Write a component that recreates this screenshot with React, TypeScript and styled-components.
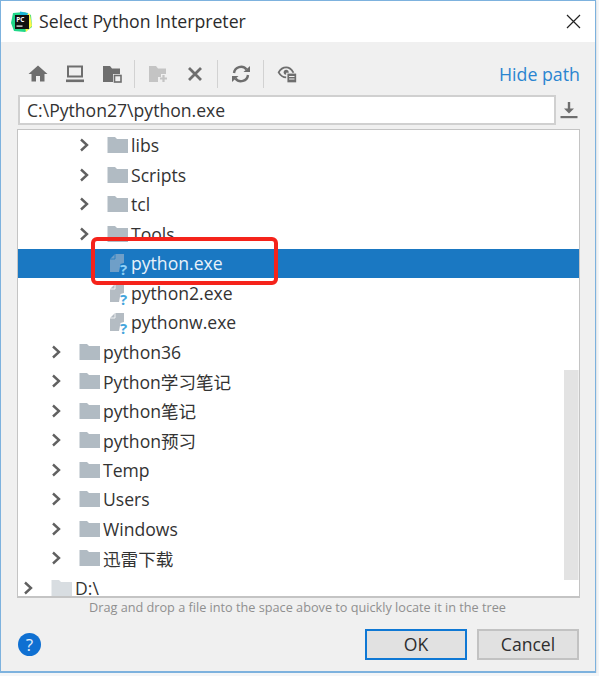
import React from 'react'
import styled, { createGlobalStyle } from 'styled-components'

const GlobalStyle = createGlobalStyle`
  html, body {
    margin: 0;
    padding: 0;
    background: #f4f6f8;
    font-family: 'Open Sans', 'Noto Sans CJK SC', sans-serif;
  }
`

const Window = styled.div`
  width: 596px;
  height: 673px;
  box-sizing: border-box;
  border: 1px solid #7db2de;
  border-bottom-width: 2px;
  background: #f0f0f0;
  box-shadow: 0 1px 2px rgba(0, 0, 0, 0.2);
  display: flex;
  flex-direction: column;
  position: relative;
  overflow: hidden;
`

const TitleBar = styled.div`
  height: 41px;
  flex: none;
  background: #fff;
  display: flex;
  align-items: center;
  padding: 0 14px 0 9px;
`

const Title = styled.div`
  flex: 1;
  margin-left: 6px;
  margin-top: -2px;
  font-size: 17.7px;
  color: #2b2b2b;
`

const Toolbar = styled.div`
  height: 53px;
  flex: none;
  display: flex;
  align-items: center;
  padding: 10px 15px 0 27px;
  box-sizing: border-box;
`

const ToolButton = styled.div`
  width: 20px;
  height: 20px;
  margin-right: 17px;
  display: flex;
  align-items: center;
  justify-content: center;
`

const Divider = styled.div`
  width: 1px;
  height: 28px;
  background: #d2d2d2;
  margin: 0 13px 0 -5px;
`

const HidePath = styled.a`
  margin-left: auto;
  font-size: 17.8px;
  color: #2a85d0;
`

const PathRow = styled.div`
  flex: none;
  display: flex;
  align-items: center;
  padding: 0 14px 0 17px;
  height: 30px;
  gap: 1px;
`

const PathInput = styled.div`
  flex: 1;
  height: 30px;
  box-sizing: border-box;
  border: 2px solid #d0d0d0;
  background: #fff;
  font-size: 17.6px;
  color: #333;
  line-height: 26px;
  padding-left: 7px;
`

const DownloadButton = styled.div`
  width: 24px;
  height: 24px;
  display: flex;
  align-items: center;
  justify-content: center;
`

const TreeBox = styled.div`
  flex: none;
  height: 469px;
  margin: 4px 15px 0 16px;
  padding-top: 0.5px;
  box-sizing: border-box;
  border: 1px solid #c4c4c4;
  border-width: 1px 1px 2px 1px;
  background: #fff;
  overflow: hidden;
`

const Row = styled.div<{ $depth: number; $selected?: boolean }>`
  height: 29.53px;
  display: flex;
  align-items: center;
  padding-left: ${p => p.$depth * 28 + 1}px;
  background: ${p => (p.$selected ? '#1a78c2' : 'transparent')};
  color: ${p => (p.$selected ? '#e8f2fa' : '#333')};
  font-size: 17.6px;
  white-space: nowrap;
`

const ArrowSlot = styled.div`
  width: 12px;
  height: 16px;
  margin-left: 4px;
  margin-right: 16px;
  flex: none;
  display: flex;
  align-items: center;
`

const IconSlot = styled.div`
  width: 24px;
  height: 24px;
  flex: none;
  display: flex;
  align-items: center;
  position: relative;
`

const FileMark = styled.span<{ $selected?: boolean }>`
  position: absolute;
  left: 13px;
  top: 11px;
  font-size: 15px;
  font-weight: 700;
  line-height: 15px;
  color: ${p => (p.$selected ? '#8fd0f5' : '#45a5dc')};
`

const Hint = styled.div`
  flex: none;
  text-align: center;
  font-size: 12.7px;
  color: #8f8f8f;
  height: 20px;
  line-height: 19px;
  padding-right: 1px;
`

const Footer = styled.div`
  flex: 1;
  display: flex;
  align-items: center;
  padding: 0 16px 0 17px;
`

const HelpButton = styled.div`
  width: 23px;
  height: 23px;
  border-radius: 50%;
  background: #0f70d2;
  color: #e6f0fb;
  font-size: 17px;
  line-height: 23px;
  text-align: center;
  margin-right: auto;
`

const Button = styled.div<{ $primary?: boolean }>`
  width: 102px;
  height: 31px;
  box-sizing: border-box;
  margin-left: 10px;
  background: #e1e1e1;
  border: 2px solid ${p => (p.$primary ? '#0f78d4' : '#c2c2c2')};
  font-size: 17.6px;
  line-height: 26px;
  text-align: center;
  color: #2e2e2e;
`

const Scrollbar = styled.div`
  position: absolute;
  left: 563px;
  top: 369px;
  width: 14px;
  height: 210px;
  background: #e3e3e3;
  border-right: 1px solid #f0f0f0;
`

const Highlight = styled.div`
  position: absolute;
  left: 90px;
  top: 236px;
  width: 187px;
  height: 48px;
  box-sizing: border-box;
  border: 4px solid #f5231b;
  border-radius: 6px;
`

const gray = '#6e6e6e'

const Home = () => (
  <svg width="20" height="17" viewBox="0 0 20 17">
    <path d="M10 0.5 L19.5 9 H16.5 V16.5 H12 V11 H8 V16.5 H3.5 V9 H0.5 Z" fill={gray} />
  </svg>
)

const Monitor = () => (
  <svg width="20" height="18" viewBox="0 0 20 18">
    <path d="M3 1.5 H17 V11.5 H3 Z" fill="none" stroke={gray} strokeWidth="2" />
    <rect x="1" y="14.5" width="18" height="2.6" fill={gray} />
  </svg>
)

const FolderDoc = () => (
  <svg width="20" height="18" viewBox="0 0 20 18">
    <path d="M1 1 H8 L10 3.5 H18 V9 H11 V17 H1 Z" fill={gray} />
    <rect x="12.5" y="10.5" width="6.5" height="6.5" fill="none" stroke={gray} strokeWidth="1.6" />
  </svg>
)

const FolderPlus = () => (
  <svg width="20" height="18" viewBox="0 0 20 18">
    <path d="M1 1 H8 L10 3.5 H18 V9 H13 V12 H10 V17 H1 Z" fill="#c4c4c4" />
    <path d="M15.5 10 V17 M12 13.5 H19" stroke="#c4c4c4" strokeWidth="2.2" />
  </svg>
)

const Cross = () => (
  <svg width="16" height="16" viewBox="0 0 16 16">
    <path d="M2 2 L14 14 M14 2 L2 14" stroke={gray} strokeWidth="2.8" />
  </svg>
)

const Refresh = () => (
  <svg width="20" height="20" viewBox="0 0 20 20">
    <path d="M3 9 A7 7 0 0 1 15.5 5.5" fill="none" stroke={gray} strokeWidth="2.4" />
    <path d="M12.5 8 H19 V2 Z" fill={gray} />
    <path d="M17 11 A7 7 0 0 1 4.5 14.5" fill="none" stroke={gray} strokeWidth="2.4" />
    <path d="M7.5 12 H1 V18 Z" fill={gray} />
  </svg>
)

const EyeDoc = () => (
  <svg width="24" height="22" viewBox="0 0 24 22">
    <path d="M2 9 C4.5 4.5 8 3 11 3 C14 3 17 4.5 19.5 9 C17 13.5 14 15 11 15 C8 15 4.5 13.5 2 9 Z" fill="none" stroke={gray} strokeWidth="2.2" />
    <circle cx="11" cy="9" r="3" fill={gray} />
    <rect x="11" y="9.5" width="12" height="11" fill="#f0f0f0" />
    <rect x="12.5" y="10.5" width="10.5" height="10.5" fill={gray} />
    <path d="M14.5 14 H21 M14.5 17 H21" stroke="#f0f0f0" strokeWidth="1.3" />
  </svg>
)

const Download = () => (
  <svg width="18" height="18" viewBox="0 0 18 18">
    <path d="M9 1 V10" stroke={gray} strokeWidth="2.4" />
    <path d="M4 7.5 H14 L9 12.5 Z" fill={gray} />
    <rect x="0.5" y="15" width="17" height="2.2" fill={gray} />
  </svg>
)

const Close = () => (
  <svg width="15" height="15" viewBox="0 0 15 15">
    <path d="M1 1 L14 14 M14 1 L1 14" stroke="#222" strokeWidth="1.2" />
  </svg>
)

const Logo = () => (
  <svg width="23" height="22" viewBox="0 0 23 22">
    <path d="M3 2 L14 1 L21 4 L22 16 L15 21 L4 20 L1 12 Z" fill="#21d789" />
    <path d="M13 1 L20 3 L22 15 L16 21 L14 10 Z" fill="#fcf84a" />
    <path d="M10 0.5 L18 2 L17 5 L10 5 Z" fill="#1cb5d8" />
    <rect x="5" y="4" width="14" height="14" fill="#111" />
    <text x="6.2" y="11" fontSize="6.5" fontWeight="700" fill="#fff" fontFamily="Open Sans, sans-serif">PC</text>
    <rect x="6.5" y="14.5" width="6" height="1.2" fill="#fff" />
  </svg>
)

const Arrow = () => (
  <svg width="11" height="14" viewBox="0 0 11 14">
    <path d="M2 1.5 L8 7 L2 12.5" fill="none" stroke="#606060" strokeWidth="2.4" />
  </svg>
)

const Folder = ({ drive }: { drive?: boolean }) => (
  <svg width="22" height="18" viewBox="0 0 22 18">
    <path d="M0.5 1 H8 L10 3 H21 V17 H0.5 Z" fill={drive ? '#d8dde1' : '#b1bbc3'} />
  </svg>
)

const ExeFile = ({ selected }: { selected?: boolean }) => {
  const body = selected ? '#6f9fc8' : '#b4bcc3'
  const fold = selected ? '#1a78c2' : '#ffffff'
  return (
    <>
      <svg width="24" height="24" viewBox="0 0 24 24">
        <path d="M8 3 H17 V12 L13.5 13 L12 21 H3 V8 Z" fill={body} />
        <path d="M8 3 V8 H3" fill="none" stroke={fold} strokeWidth="0.8" />
      </svg>
      <FileMark $selected={selected}>?</FileMark>
    </>
  )
}

interface INode {
  name: string
  depth: number
  type: 'folder' | 'file' | 'drive'
  selected?: boolean
}

const nodes: INode[] = [
  { name: 'libs', depth: 2, type: 'folder' },
  { name: 'Scripts', depth: 2, type: 'folder' },
  { name: 'tcl', depth: 2, type: 'folder' },
  { name: 'Tools', depth: 2, type: 'folder' },
  { name: 'python.exe', depth: 2, type: 'file', selected: true },
  { name: 'python2.exe', depth: 2, type: 'file' },
  { name: 'pythonw.exe', depth: 2, type: 'file' },
  { name: 'python36', depth: 1, type: 'folder' },
  { name: 'Python学习笔记', depth: 1, type: 'folder' },
  { name: 'python笔记', depth: 1, type: 'folder' },
  { name: 'python预习', depth: 1, type: 'folder' },
  { name: 'Temp', depth: 1, type: 'folder' },
  { name: 'Users', depth: 1, type: 'folder' },
  { name: 'Windows', depth: 1, type: 'folder' },
  { name: '迅雷下载', depth: 1, type: 'folder' },
  { name: 'D:\\', depth: 0, type: 'drive' },
]

const App: React.FC = () => (
  <>
    <GlobalStyle />
    <Window>
      <TitleBar>
        <Logo />
        <Title>Select Python Interpreter</Title>
        <Close />
      </TitleBar>
      <Toolbar>
        <ToolButton><Home /></ToolButton>
        <ToolButton><Monitor /></ToolButton>
        <ToolButton><FolderDoc /></ToolButton>
        <Divider />
        <ToolButton><FolderPlus /></ToolButton>
        <ToolButton><Cross /></ToolButton>
        <Divider />
        <ToolButton><Refresh /></ToolButton>
        <Divider />
        <ToolButton><EyeDoc /></ToolButton>
        <HidePath>Hide path</HidePath>
      </Toolbar>
      <PathRow>
        <PathInput>C:\Python27\python.exe</PathInput>
        <DownloadButton><Download /></DownloadButton>
      </PathRow>
      <TreeBox>
        {nodes.map(node => (
          <Row key={node.name} $depth={node.depth} $selected={node.selected}>
            <ArrowSlot>{node.type !== 'file' && <Arrow />}</ArrowSlot>
            <IconSlot>
              {node.type === 'file' ? (
                <ExeFile selected={node.selected} />
              ) : (
                <Folder drive={node.type === 'drive'} />
              )}
            </IconSlot>
            {node.name}
          </Row>
        ))}
      </TreeBox>
      <Hint>Drag and drop a file into the space above to quickly locate it in the tree</Hint>
      <Footer>
        <HelpButton>?</HelpButton>
        <Button $primary>OK</Button>
        <Button>Cancel</Button>
      </Footer>
      <Scrollbar />
      <Highlight />
    </Window>
  </>
)

export default App
